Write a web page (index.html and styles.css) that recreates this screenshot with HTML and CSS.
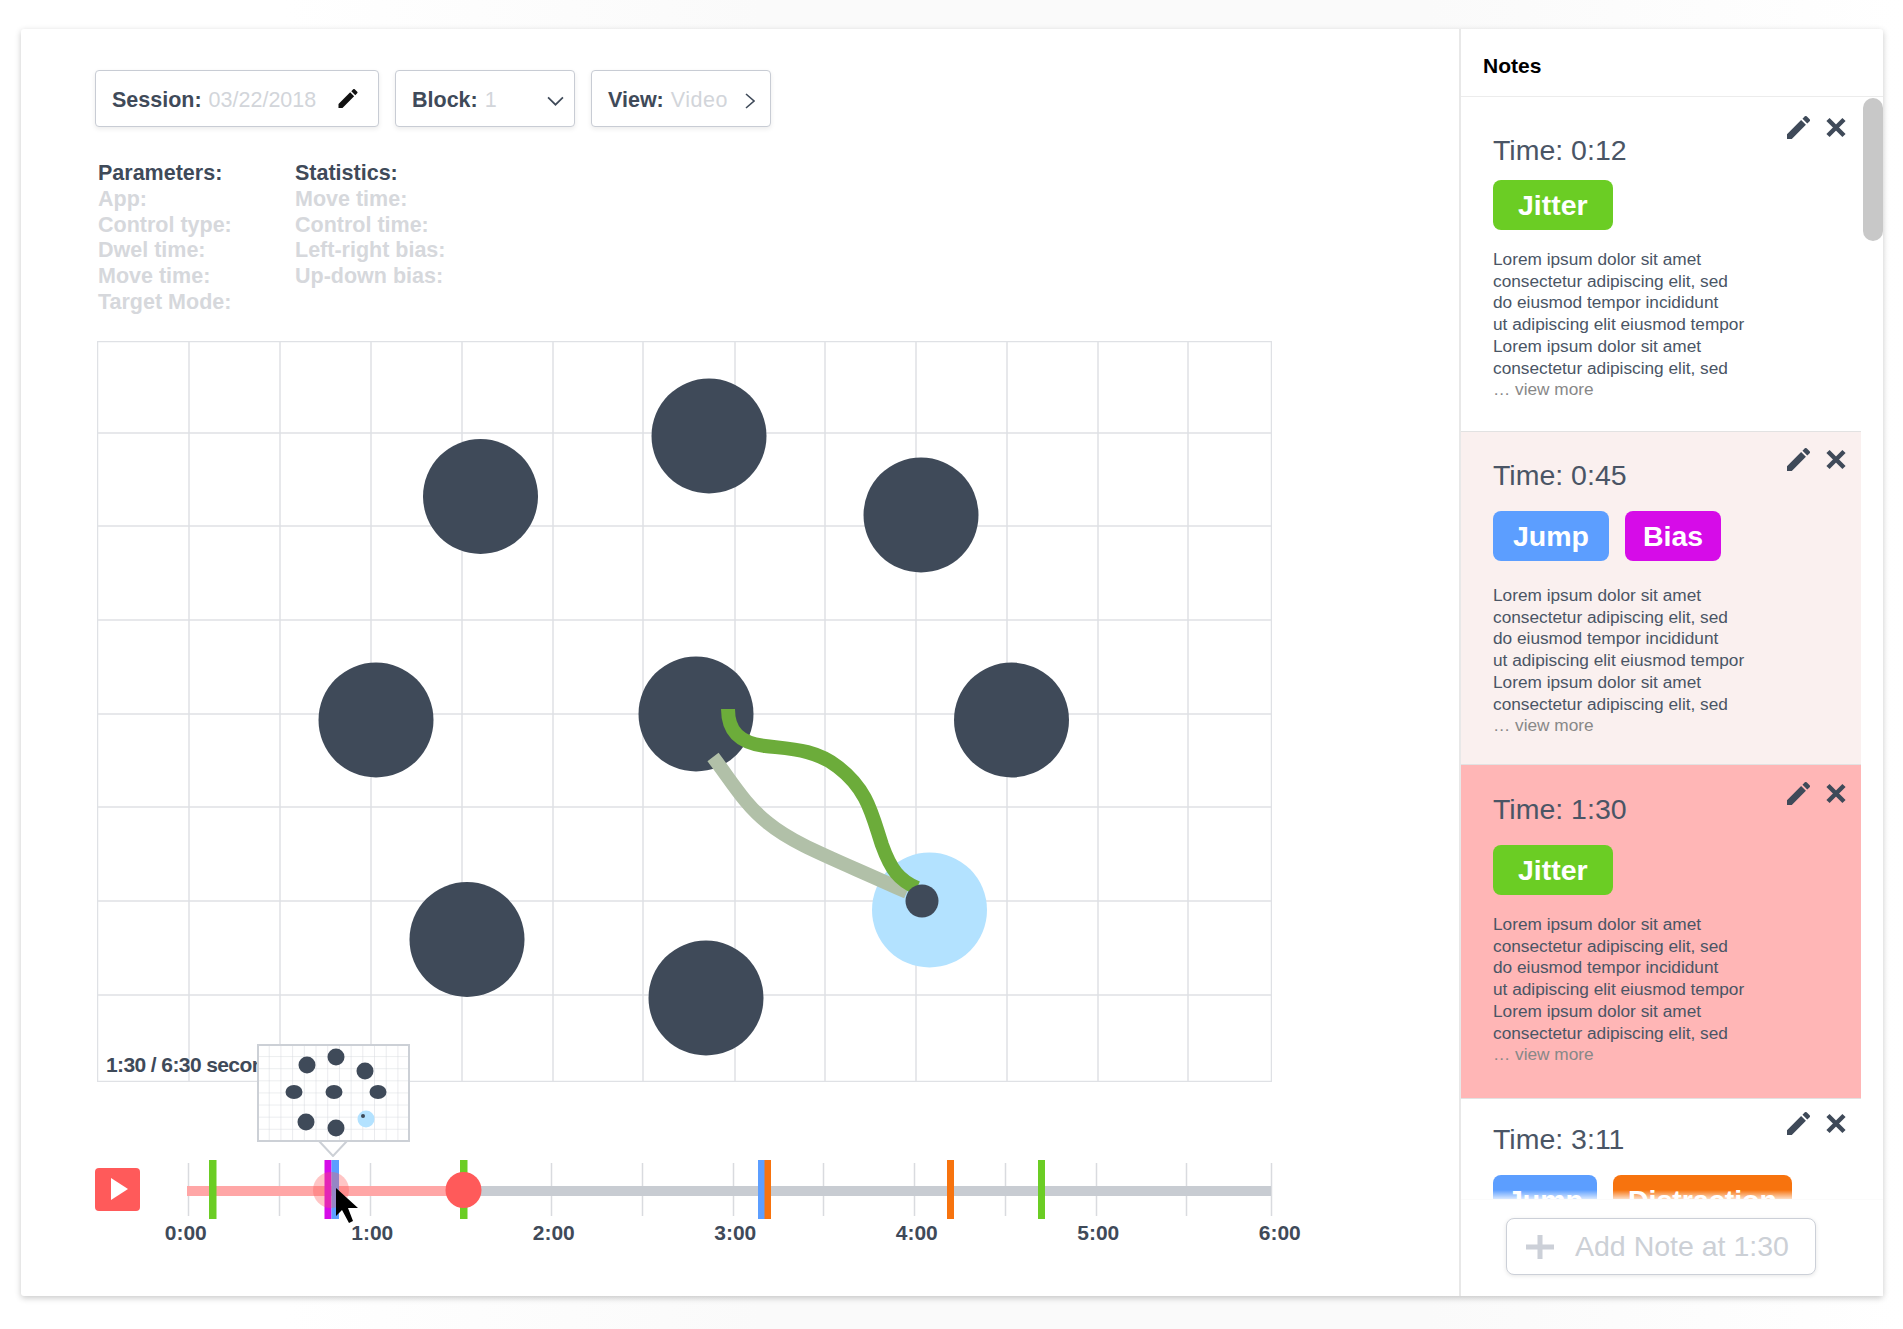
FILE: index.html
```html
<!DOCTYPE html>
<html lang="en">
<head>
  <meta charset="UTF-8" />
  <title>Session Review</title>
  <link rel="stylesheet" href="styles.css">
</head>
<body>

  <div class="card">
    <main class="main">

      <div class="toolbar">
        <div class="field field-session">
          <span class="field-text"><b>Session:</b> <span class="muted">03/22/2018</span></span>
          <svg class="pencil-dark" viewBox="3 3 18 18"><path d="M3 17.25V21h3.75L17.81 9.94l-3.75-3.75L3 17.25zM20.71 7.04a1 1 0 0 0 0-1.41l-2.34-2.34a1 1 0 0 0-1.41 0l-1.83 1.83 3.75 3.75 1.83-1.83z"/></svg>
        </div>
        <div class="field field-block">
          <span class="field-text"><b>Block:</b> <span class="muted">1</span></span>
          <svg class="chevron-down" viewBox="0 0 16 9"><path d="M1 1l7 7 7-7"/></svg>
        </div>
        <div class="field field-view">
          <span class="field-text"><b>View:</b> <span class="muted">Video</span></span>
          <svg class="chevron-right" viewBox="0 0 10 16"><path d="M1 1l8 7-8 7"/></svg>
        </div>
      </div>

      <div class="info">
        <div class="info-col">
          <h4>Parameters:</h4>
          <p>App:</p>
          <p>Control type:</p>
          <p>Dwel time:</p>
          <p>Move time:</p>
          <p>Target Mode:</p>
        </div>
        <div class="info-col">
          <h4>Statistics:</h4>
          <p>Move time:</p>
          <p>Control time:</p>
          <p>Left-right bias:</p>
          <p>Up-down bias:</p>
        </div>
      </div>

      <div class="stage">
        <svg class="plot" viewBox="97 341 1175 741">
          <path class="grid-lines" d="M189 341V1082M280 341V1082M371 341V1082M462 341V1082M553 341V1082M643 341V1082M735 341V1082M825 341V1082M916 341V1082M1007 341V1082M1098 341V1082M1188 341V1082M97 433H1272M97 526H1272M97 620H1272M97 714H1272M97 807H1272M97 901H1272M97 995H1272"/>
          <rect class="grid-frame" x="97.5" y="341.5" width="1174" height="740"/>
          <circle class="target" cx="709" cy="436" r="57.5"/>
          <circle class="target" cx="480.5" cy="496.5" r="57.5"/>
          <circle class="target" cx="921" cy="515" r="57.5"/>
          <circle class="target" cx="376" cy="720" r="57.5"/>
          <circle class="target" cx="696" cy="714" r="57.5"/>
          <circle class="target" cx="1011.5" cy="720" r="57.5"/>
          <circle class="target" cx="467" cy="939.5" r="57.5"/>
          <circle class="target" cx="706" cy="998" r="57.5"/>
          <circle class="target-active" cx="929.5" cy="910" r="57.5"/>
          <path class="trace-ideal" d="M713 757C732 782 745 805 768 823C795 845 830 857 907 892"/>
          <path class="trace-real" d="M728 709C728 732 740 743 765 746C790 749 815 749 838 767C868 790 872 815 882 845C891 870 899 880 917 888"/>
          <circle class="target" cx="922" cy="901" r="16.5"/>
        </svg>

        <div class="time-label">1:30 / 6:30 seconds</div>

        <svg class="preview" viewBox="257 1044 153 113">
          <defs>
            <pattern id="miniGrid" x="258" y="1045" width="11.7" height="12.1" patternUnits="userSpaceOnUse">
              <path class="mini-lines" d="M11.7 0V12.1M0 12.1H11.7"/>
            </pattern>
          </defs>
          <path class="preview-arrow" d="M319 1141L333 1156L347 1141"/>
          <rect class="preview-back" x="258" y="1045" width="151" height="96"/>
          <rect class="preview-frame" x="258" y="1045" width="151" height="96"/>
          <ellipse class="target" cx="307" cy="1065" rx="8.5" ry="8.5"/>
          <ellipse class="target" cx="336" cy="1057" rx="8.5" ry="8.5"/>
          <ellipse class="target" cx="365" cy="1071" rx="8.5" ry="8.5"/>
          <ellipse class="target" cx="294" cy="1092" rx="8.5" ry="7"/>
          <ellipse class="target" cx="334" cy="1092" rx="8.5" ry="7"/>
          <ellipse class="target" cx="378" cy="1092" rx="8.5" ry="7"/>
          <ellipse class="target" cx="306" cy="1122" rx="8.5" ry="8.5"/>
          <ellipse class="target" cx="336" cy="1128" rx="8.5" ry="8.5"/>
          <ellipse class="target-active" cx="366" cy="1119" rx="8.5" ry="8.5"/>
          <circle class="target" cx="363" cy="1116" r="2"/>
        </svg>

        <div class="timeline">
          <button class="play" type="button">
            <svg viewBox="0 0 17 22"><path d="M0 0L17 11L0 22z"/></svg>
          </button>
          <svg class="track" viewBox="160 1160 1115 59">
            <path class="ticks" d="M188.5 1163V1216M279.5 1163V1216M370.5 1163V1216M461.5 1163V1216M551.5 1163V1216M642.5 1163V1216M733.5 1163V1216M823.5 1163V1216M914.5 1163V1216M1005.5 1163V1216M1096.5 1163V1216M1186.5 1163V1216M1271.5 1163V1216"/>
            <rect class="track-rest" x="187" y="1186" width="1084" height="10"/>
            <rect class="track-done" x="187" y="1186" width="276" height="10"/>
            <rect class="mark-green" x="209" y="1160" width="7.5" height="59"/>
            <rect class="mark-magenta" x="324.5" y="1160" width="7" height="59"/>
            <rect class="mark-blue" x="331.5" y="1160" width="7.5" height="59"/>
            <rect class="mark-green" x="460" y="1160" width="7.5" height="59"/>
            <rect class="mark-blue" x="758" y="1160" width="7" height="59"/>
            <rect class="mark-orange" x="764.5" y="1160" width="6.5" height="59"/>
            <rect class="mark-orange" x="947" y="1160" width="7" height="59"/>
            <rect class="mark-green" x="1038" y="1160" width="7" height="59"/>
            <circle class="hover-dot" cx="331" cy="1190" r="18"/>
            <circle class="playhead" cx="463.5" cy="1190" r="18"/>
            <path class="cursor" d="M336 1188V1216L342 1210L349 1223L353 1221L348 1208H358z"/>
          </svg>
        </div>

        <div class="time-axis">
          <span class="first">0:00</span>
          <span>1:00</span>
          <span>2:00</span>
          <span>3:00</span>
          <span>4:00</span>
          <span>5:00</span>
          <span>6:00</span>
        </div>
      </div>
    </main>

    <aside class="panel">
      <div class="panel-head">Notes</div>

      <div class="note-list">
        <div class="thumb"></div>

        <div class="note note-a">
          <div class="note-actions">
            <svg class="pencil" viewBox="3 3 18 18"><path d="M3 17.25V21h3.75L17.81 9.94l-3.75-3.75L3 17.25zM20.71 7.04a1 1 0 0 0 0-1.41l-2.34-2.34a1 1 0 0 0-1.41 0l-1.83 1.83 3.75 3.75 1.83-1.83z"/></svg>
            <svg class="close" viewBox="0 0 20 20"><path d="M2 2L18 18M18 2L2 18"/></svg>
          </div>
          <div class="note-time">Time: 0:12</div>
          <div class="tags"><span class="tag tag-jitter">Jitter</span></div>
          <p class="note-body">Lorem ipsum dolor sit amet<br>consectetur adipiscing elit, sed<br>do eiusmod tempor incididunt<br>ut adipiscing elit eiusmod tempor<br>Lorem ipsum dolor sit amet<br>consectetur adipiscing elit, sed<br><span class="view-more">… view more</span></p>
        </div>

        <div class="note note-b">
          <div class="note-actions">
            <svg class="pencil" viewBox="3 3 18 18"><path d="M3 17.25V21h3.75L17.81 9.94l-3.75-3.75L3 17.25zM20.71 7.04a1 1 0 0 0 0-1.41l-2.34-2.34a1 1 0 0 0-1.41 0l-1.83 1.83 3.75 3.75 1.83-1.83z"/></svg>
            <svg class="close" viewBox="0 0 20 20"><path d="M2 2L18 18M18 2L2 18"/></svg>
          </div>
          <div class="note-time">Time: 0:45</div>
          <div class="tags"><span class="tag tag-jump">Jump</span><span class="tag tag-bias">Bias</span></div>
          <p class="note-body">Lorem ipsum dolor sit amet<br>consectetur adipiscing elit, sed<br>do eiusmod tempor incididunt<br>ut adipiscing elit eiusmod tempor<br>Lorem ipsum dolor sit amet<br>consectetur adipiscing elit, sed<br><span class="view-more">… view more</span></p>
        </div>

        <div class="note note-c">
          <div class="note-actions">
            <svg class="pencil" viewBox="3 3 18 18"><path d="M3 17.25V21h3.75L17.81 9.94l-3.75-3.75L3 17.25zM20.71 7.04a1 1 0 0 0 0-1.41l-2.34-2.34a1 1 0 0 0-1.41 0l-1.83 1.83 3.75 3.75 1.83-1.83z"/></svg>
            <svg class="close" viewBox="0 0 20 20"><path d="M2 2L18 18M18 2L2 18"/></svg>
          </div>
          <div class="note-time">Time: 1:30</div>
          <div class="tags"><span class="tag tag-jitter">Jitter</span></div>
          <p class="note-body">Lorem ipsum dolor sit amet<br>consectetur adipiscing elit, sed<br>do eiusmod tempor incididunt<br>ut adipiscing elit eiusmod tempor<br>Lorem ipsum dolor sit amet<br>consectetur adipiscing elit, sed<br><span class="view-more">… view more</span></p>
        </div>

        <div class="note note-d">
          <div class="note-actions">
            <svg class="pencil" viewBox="3 3 18 18"><path d="M3 17.25V21h3.75L17.81 9.94l-3.75-3.75L3 17.25zM20.71 7.04a1 1 0 0 0 0-1.41l-2.34-2.34a1 1 0 0 0-1.41 0l-1.83 1.83 3.75 3.75 1.83-1.83z"/></svg>
            <svg class="close" viewBox="0 0 20 20"><path d="M2 2L18 18M18 2L2 18"/></svg>
          </div>
          <div class="note-time">Time: 3:11</div>
          <div class="tags"><span class="tag tag-jump tag-tight">Jump</span><span class="tag tag-distraction tag-tight">Distraction</span></div>
        </div>
      </div>

      <div class="panel-foot">
        <button class="add-note" type="button">
          <svg viewBox="0 0 28 24"><path d="M14 0V24M0 12H28"/></svg>
          <span>Add Note at 1:30</span>
        </button>
      </div>
    </aside>
  </div>

</body>
</html>
```

FILE: styles.css
```css
html, body { height: 100%; }
body {
  margin: 0;
  box-sizing: border-box;
  height: 1329px;
  overflow: hidden;
  padding: 29px 20px 33px 21px;
  background: linear-gradient(90deg, #fff 15%, #fafafa 40%, #fafafa 75%, #fff 100%);
  color: #3f4a59;
  font-family: "Liberation Sans", Arial, sans-serif;
}
.card {
  display: flex;
  height: 1267px;
  background: #fff;
  border-radius: 3px;
  box-shadow: 0 2px 6px rgba(0, 0, 0, .22);
}
.main { flex: 1; min-width: 0; padding: 41px 0 0 74px; }

/* top controls */
.toolbar { display: flex; gap: 16px; }
.field {
  display: flex;
  align-items: center;
  justify-content: space-between;
  box-sizing: border-box;
  height: 57px;
  padding: 4px 14px 0 16px;
  background: #fff;
  border: 1.5px solid #c8ccd4;
  border-radius: 4px;
  box-shadow: 0 2px 5px rgba(0, 0, 0, .08);
  font-size: 21.5px;
  white-space: nowrap;
}
.field-session { width: 284px; padding-right: 20px; }
.field-block { width: 180px; padding-right: 10px; }
.field-view { width: 180px; padding-right: 15px; }
.muted { margin-left: 1px; color: #d2d5da; }
.field-view .muted { letter-spacing: .5px; }
.pencil-dark { width: 20px; height: 19px; margin-top: -4px; fill: #111; }
.chevron-down { width: 17px; height: 10px; fill: none; stroke: #3f4a59; stroke-width: 1.6; }
.chevron-right { width: 10px; height: 16px; fill: none; stroke: #3f4a59; stroke-width: 1.6; }

/* parameters and statistics */
.info { display: flex; margin: 34px 0 25px 3px; font-size: 21.5px; line-height: 25.8px; font-weight: bold; }
.info-col { width: 197px; }
.info h4, .info p { margin: 0; font-size: inherit; white-space: nowrap; }
.info p { color: #d6d8dc; }

/* plot */
.stage { position: relative; }
.plot { display: block; width: 1175px; height: 741px; margin-left: 2px; }
.grid-lines { fill: none; stroke: #dfe1e5; stroke-width: 1.5; }
.grid-frame { fill: none; stroke: #dfe1e5; stroke-width: 1.5; }
.target { fill: #3f4a59; }
.target-active { fill: #b3e2ff; }
.trace-ideal { fill: none; stroke: #b1c0a8; stroke-width: 14; }
.trace-real { fill: none; stroke: #6cac3a; stroke-width: 14; }
.time-label {
  position: absolute;
  left: 11px;
  top: 712px;
  font-size: 21px;
  font-weight: bold;
  letter-spacing: -.6px;
  line-height: 24px;
  white-space: nowrap;
}

/* hover preview */
.preview { position: absolute; left: 162px; top: 703px; width: 153px; height: 113px; }
.preview-back { fill: #fff; }
.preview-frame { fill: url(#miniGrid); stroke: #ccd0d6; stroke-width: 2; }
.preview-arrow { fill: #fff; stroke: #ccd0d6; stroke-width: 2; }
.mini-lines { fill: none; stroke: #d6d9de; stroke-width: 1; }

/* timeline */
.timeline { display: flex; align-items: center; gap: 20px; height: 59px; margin-top: 78px; }
.play {
  display: flex;
  align-items: center;
  justify-content: center;
  flex: none;
  width: 45px;
  height: 43px;
  padding: 0 0 0 3px;
  background: #ff5a5a;
  border: none;
  border-radius: 4px;
}
.play svg { width: 17px; height: 22px; fill: #fff; }
.track { display: block; flex: none; width: 1115px; height: 59px; overflow: visible; }
.ticks { fill: none; stroke: #d9dbdf; stroke-width: 1.5; }
.track-rest { fill: #c8ccd2; }
.track-done { fill: #ffa6a6; }
.mark-green { fill: #6bcd24; }
.mark-magenta { fill: #d60ce8; }
.mark-blue { fill: #5c9eff; }
.mark-orange { fill: #f7730e; }
.hover-dot { fill: #ff5a5a; opacity: .35; }
.playhead { fill: #ff5a5a; }
.cursor { fill: #000; }
.time-axis { display: flex; margin: 2px 0 0 0; font-size: 21px; font-weight: bold; line-height: 24px; }
.time-axis span { flex: none; width: 181.5px; text-align: center; }
.time-axis .first { margin-right: 5px; }

/* notes panel */
.panel {
  display: flex;
  flex-direction: column;
  flex: none;
  box-sizing: border-box;
  width: 424px;
  border-left: 2px solid #e8e8e8;
}
.panel-head {
  flex: none;
  box-sizing: border-box;
  height: 68px;
  padding: 25px 0 0 22px;
  border-bottom: 1px solid #ececec;
  color: #000;
  font-size: 21px;
  font-weight: bold;
  line-height: 24px;
}
.note-list { position: relative; flex: 1; min-height: 0; overflow: hidden; padding-right: 22px; }
.thumb {
  position: absolute;
  top: 1px;
  right: 0;
  width: 20px;
  height: 143px;
  background: #c8c8c8;
  border-radius: 10px;
}
.note {
  position: relative;
  box-sizing: border-box;
  padding-left: 32px;
  border-bottom: 1px solid #e2e2e2;
}
.note-actions { position: absolute; right: 15px; display: flex; align-items: center; gap: 16px; }
.pencil { width: 23px; height: 23px; fill: #3f4a59; }
.close { width: 20px; height: 21px; fill: none; stroke: #3f4a59; stroke-width: 4.5; }
.note-time { font-size: 28.5px; line-height: 34px; color: #4a5565; }
.tags { display: flex; gap: 16px; }
.tag {
  box-sizing: border-box;
  height: 50px;
  padding: 0 20px;
  border-radius: 8px;
  color: #fff;
  font-size: 28.5px;
  font-weight: bold;
  line-height: 51px;
}
.tag-jitter { padding: 0 25px; background: #6bcd24; }
.tag-jump { background: #5c9eff; }
.tag-bias { padding: 0 18px; background: #d60ce8; }
.tag-distraction { background: #f7730e; }
.tag-tight { padding: 0 14px; }
.tag-distraction.tag-tight { padding: 0 15px; }
.note-body { margin: 0; font-size: 17.25px; line-height: 21.7px; color: #4a5565; }
.view-more { color: #888; }

.note-a { height: 335px; padding-top: 36px; }
.note-a .note-actions { top: 19px; }
.note-a .tags { margin-top: 13px; }
.note-a .note-body { margin-top: 19px; }

.note-b { height: 333px; padding-top: 26px; background: #faf0ef; }
.note-b .note-actions { top: 16px; }
.note-b .tags { margin-top: 19px; }
.note-b .note-body { margin-top: 24px; }

.note-c { height: 334px; padding-top: 27px; background: #ffb6b6; }
.note-c .note-actions { top: 17px; }
.note-c .tags { margin-top: 19px; }
.note-c .note-body { margin-top: 19px; }

.note-d { height: 200px; padding-top: 23px; }
.note-d .note-actions { top: 13px; }
.note-d .tags { margin-top: 19px; }

.panel-foot {
  position: relative;
  flex: none;
  box-sizing: border-box;
  height: 97px;
  padding: 18px 0 0 45px;
  background: #fff;
  border-top: 1px solid #ececec;
}
.panel-foot::before {
  content: "";
  position: absolute;
  left: 0;
  right: 0;
  top: -10px;
  height: 10px;
  background: linear-gradient(rgba(255, 255, 255, 0), rgba(255, 255, 255, .85));
}
.add-note {
  display: flex;
  align-items: center;
  gap: 21px;
  box-sizing: border-box;
  width: 310px;
  height: 57px;
  padding: 0 0 0 19px;
  background: #fff;
  border: 1.5px solid #ccd0d8;
  border-radius: 8px;
  box-shadow: 0 1px 4px rgba(0, 0, 0, .1);
  color: #ccd0d6;
  font-family: inherit;
  font-size: 28.5px;
}
.add-note svg { flex: none; width: 28px; height: 24px; fill: none; stroke: #ccd0d8; stroke-width: 5; }
```
